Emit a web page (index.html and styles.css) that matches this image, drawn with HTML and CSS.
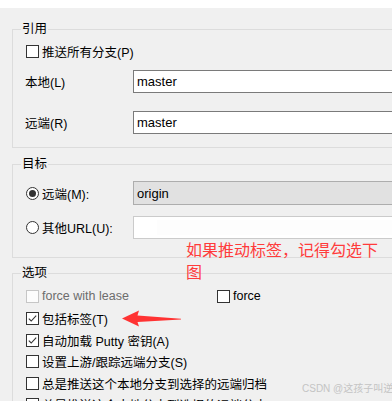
FILE: index.html
```html
<!DOCTYPE html>
<html lang="zh-CN">
<head>
    <meta charset="UTF-8">
    <meta name="viewport" content="width=device-width, initial-scale=1.0">
    <title>推送</title>
    <link rel="stylesheet" href="styles.css">
</head>
<body>
    <div class="top-strip"></div>

    <div class="dialog">
        <fieldset class="group group-ref">
            <legend>引用</legend>
            <label class="check push-all"><span class="box"></span>推送所有分支(P)</label>
            <div class="field field-local">
                <span class="field-label">本地(L)</span>
                <span class="edit">master</span>
            </div>
            <div class="field field-remote">
                <span class="field-label">远端(R)</span>
                <span class="edit">master</span>
            </div>
        </fieldset>

        <fieldset class="group group-target">
            <legend>目标</legend>
            <div class="field field-remote-name">
                <label class="radio field-label"><span class="dot checked"></span>远端(M):</label>
                <span class="combo">origin</span>
            </div>
            <div class="field field-url">
                <label class="radio field-label"><span class="dot"></span>其他URL(U):</label>
                <span class="edit edit-url"><span class="url-mask"></span></span>
            </div>
        </fieldset>

        <fieldset class="group group-options">
            <legend>选项</legend>
            <div class="option-pair">
                <label class="check disabled"><span class="box"></span>force with lease</label>
                <label class="check"><span class="box"></span>force</label>
            </div>
            <label class="check">
                <span class="box"><svg viewBox="0 0 11 11"><path d="M1.8 5.6 L4.2 8 L9.2 2.6"></path></svg></span>包括标签(T)
            </label>
            <label class="check">
                <span class="box"><svg viewBox="0 0 11 11"><path d="M1.8 5.6 L4.2 8 L9.2 2.6"></path></svg></span>自动加载 Putty 密钥(A)
            </label>
            <label class="check"><span class="box"></span>设置上游/跟踪远端分支(S)</label>
            <label class="check"><span class="box"></span>总是推送这个本地分支到选择的远端归档</label>
            <label class="check"><span class="box"></span>总是推送这个本地分支到选择的远端分支</label>
        </fieldset>
    </div>

    <!-- 标注 -->
    <p class="note">如果推动标签，记得勾选下图</p>
    <svg class="arrow" width="64" height="22" viewBox="0 0 64 22">
        <path d="M2 10.5 L19 2.5 L17.5 7.5 L61 10.8 L61 11.6 L17.5 14 L19 18.5 Z"></path>
    </svg>
    <div class="watermark">CSDN @这孩子叫逆</div>
</body>
</html>
```

FILE: styles.css
```css
* {
    box-sizing: border-box;
}

html,
body {
    overflow: hidden;
}

body {
    margin: 0;
    background: #f0f0f0;
    color: #000;
    font-family: "Liberation Sans", "Noto Sans CJK SC", sans-serif;
    font-size: 12.5px;
}

.top-strip {
    height: 8px;
    background: #fff;
}

.dialog {
    width: 470px;
}

.group {
    margin: 0 0 0 12px;
    padding: 0 0 13px 12px;
    border: 1px solid #dcdcdc;
    min-width: 0;
}

.group legend {
    margin-left: -4px;
    padding: 0 1px;
    line-height: 18px;
}

.group-ref {
    margin-top: 12px;
}

.group-target {
    margin-top: 7px;
    padding-bottom: 18px;
}

.group-options {
    margin-top: 6px;
}

/* 复选框 / 单选框 */
.check,
.radio {
    display: flex;
    align-items: center;
    gap: 3px;
    white-space: nowrap;
}

.box {
    width: 13px;
    height: 13px;
    margin-left: 1px;
    border: 1px solid #333;
    background: #fff;
    flex: none;
    display: flex;
}

.box svg {
    width: 11px;
    height: 11px;
}

.box path {
    fill: none;
    stroke: #333;
    stroke-width: 1.1;
}

.check.disabled {
    color: #6d6d6d;
}

.check.disabled .box {
    border-color: #c6c6c6;
    background: #fcfcfc;
}

.dot {
    width: 13px;
    height: 13px;
    margin-left: 1px;
    border: 1px solid #333;
    border-radius: 50%;
    background: #fff;
    flex: none;
    display: flex;
    align-items: center;
    justify-content: center;
}

.dot.checked::after {
    content: "";
    width: 7px;
    height: 7px;
    border-radius: 50%;
    background: #333;
}

/* 输入行 */
.field {
    display: flex;
    align-items: center;
}

.field-label {
    width: 108px;
    flex: none;
}

.edit,
.combo {
    flex: 1;
    height: 23px;
    padding: 0 3px;
    border: 1px solid #7a7a7a;
    background: #fff;
    display: flex;
    align-items: center;
    font-size: 13px;
}

.combo {
    height: 24px;
    border-color: #adadad;
    background: #e1e1e1;
}

.push-all {
    margin-top: 3px;
    height: 20px;
}

.field-local {
    margin-top: 9px;
}

.field-remote {
    margin-top: 18px;
}

.field-remote-name {
    margin-top: 8px;
}

.field-url {
    margin-top: 11px;
}

.edit-url {
    border-color: #cbcbcb;
    padding: 0;
}

.url-mask {
    margin-left: 23px;
    height: 15px;
    flex: 1;
    background: #fdfdfd;
}

/* 选项 */
.option-pair {
    display: grid;
    grid-template-columns: 191px auto;
    height: 22px;
    margin-top: 3px;
    margin-bottom: 1px;
}

.group-options > .check {
    height: 21.5px;
}

/* 标注 */
.note {
    position: absolute;
    left: 186px;
    top: 238px;
    width: 196px;
    margin: 0;
    color: #ff3b3b;
    font-family: "Noto Sans CJK SC", sans-serif;
    font-size: 16px;
    line-height: 22px;
}

.arrow {
    position: absolute;
    left: 120px;
    top: 308px;
}

.arrow path {
    fill: #f33;
}

.watermark {
    position: absolute;
    left: 302px;
    top: 383px;
    color: #c4c4c4;
    font-size: 10px;
    line-height: 12px;
    white-space: nowrap;
}
```
